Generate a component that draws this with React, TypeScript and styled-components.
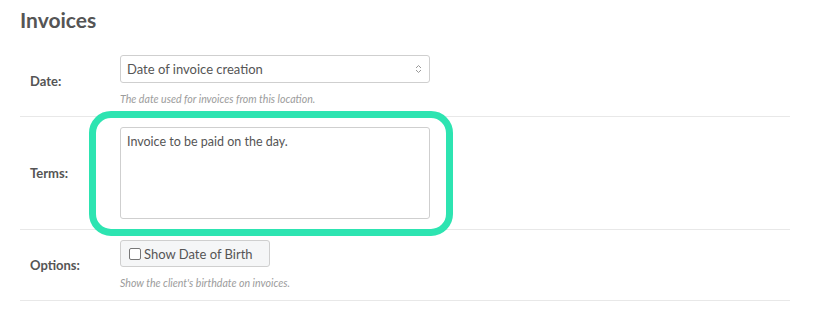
import React from 'react';
import styled, { createGlobalStyle } from 'styled-components';

const GlobalStyle = createGlobalStyle`
  body {
    margin: 0;
    background: #fff;
    font-family: Lato, "Open Sans", sans-serif;
    color: #555;
  }
`;

const Page = styled.section`
  width: 770px;
  padding-left: 20px;
`;

const Title = styled.h2`
  margin: 0 0 13px;
  padding-top: 8px;
  font-size: 21px;
  line-height: 24px;
  font-weight: 700;
  color: #555;
`;

const Row = styled.div`
  display: grid;
  grid-template-columns: 100px 310px;
  align-items: center;
  padding: 10px 0;
  border-bottom: 1px solid #e8e8e8;
`;

const Label = styled.label`
  padding-left: 10px;
  font-size: 13px;
  font-weight: 700;
  color: #555;
`;

const Field = styled.div`
  display: flex;
  flex-direction: column;
`;

const SelectBox = styled.div`
  position: relative;
  height: 28px;
`;

const Select = styled.select`
  appearance: none;
  width: 100%;
  height: 28px;
  box-sizing: border-box;
  padding: 0 24px 0 6px;
  border: 1px solid #cfcfcf;
  border-radius: 3px;
  background: #fff;
  font-family: inherit;
  font-size: 13px;
  color: #555;
`;

const Chevrons = styled.svg`
  position: absolute;
  right: 8px;
  top: 9px;
  pointer-events: none;
`;

const Help = styled.p`
  margin: 9px 0 0;
  font-size: 10.6px;
  line-height: 14px;
  font-style: italic;
  color: #9c9c9c;
`;

const Highlighted = styled.div`
  position: relative;
`;

const Ring = styled.div`
  position: absolute;
  left: -31px;
  top: -16px;
  right: -23px;
  bottom: -17px;
  border: 7px solid #2de4b1;
  border-radius: 22px;
  pointer-events: none;
`;

const TextArea = styled.textarea`
  display: block;
  width: 100%;
  height: 92px;
  box-sizing: border-box;
  padding: 5px 6px;
  border: 1px solid #cfcfcf;
  border-radius: 3px;
  resize: none;
  font-family: inherit;
  font-size: 12.5px;
  line-height: 18px;
  color: #555;
`;

const CheckButton = styled.label`
  display: inline-flex;
  align-items: center;
  gap: 3px;
  align-self: flex-start;
  box-sizing: border-box;
  width: 150px;
  height: 27px;
  padding: 0 8px;
  border: 1px solid #cfcfcf;
  border-radius: 3px;
  background: #f5f6f7;
  font-size: 13px;
  color: #555;
`;

const Box = styled.span`
  width: 10px;
  height: 10px;
  border: 1px solid #777;
  border-radius: 2px;
  background: #fff;
`;

function App() {
  return (
    <Page>
      <GlobalStyle />
      <Title>Invoices</Title>
      <Row>
        <Label>Date:</Label>
        <Field>
          <SelectBox>
            <Select defaultValue="creation">
              <option value="creation">Date of invoice creation</option>
            </Select>
            <Chevrons width="7" height="10" viewBox="0 0 7 10">
              <path d="M1 4 L3.5 1.5 L6 4 M1 6 L3.5 8.5 L6 6" fill="none" stroke="#999" strokeWidth="1" />
            </Chevrons>
          </SelectBox>
          <Help>The date used for invoices from this location.</Help>
        </Field>
      </Row>
      <Row>
        <Label>Terms:</Label>
        <Highlighted>
          <TextArea defaultValue="Invoice to be paid on the day." />
          <Ring />
        </Highlighted>
      </Row>
      <Row>
        <Label>Options:</Label>
        <Field>
          <CheckButton>
            <Box />
            Show Date of Birth
          </CheckButton>
          <Help>Show the client's birthdate on invoices.</Help>
        </Field>
      </Row>
    </Page>
  );
}

export default App;
